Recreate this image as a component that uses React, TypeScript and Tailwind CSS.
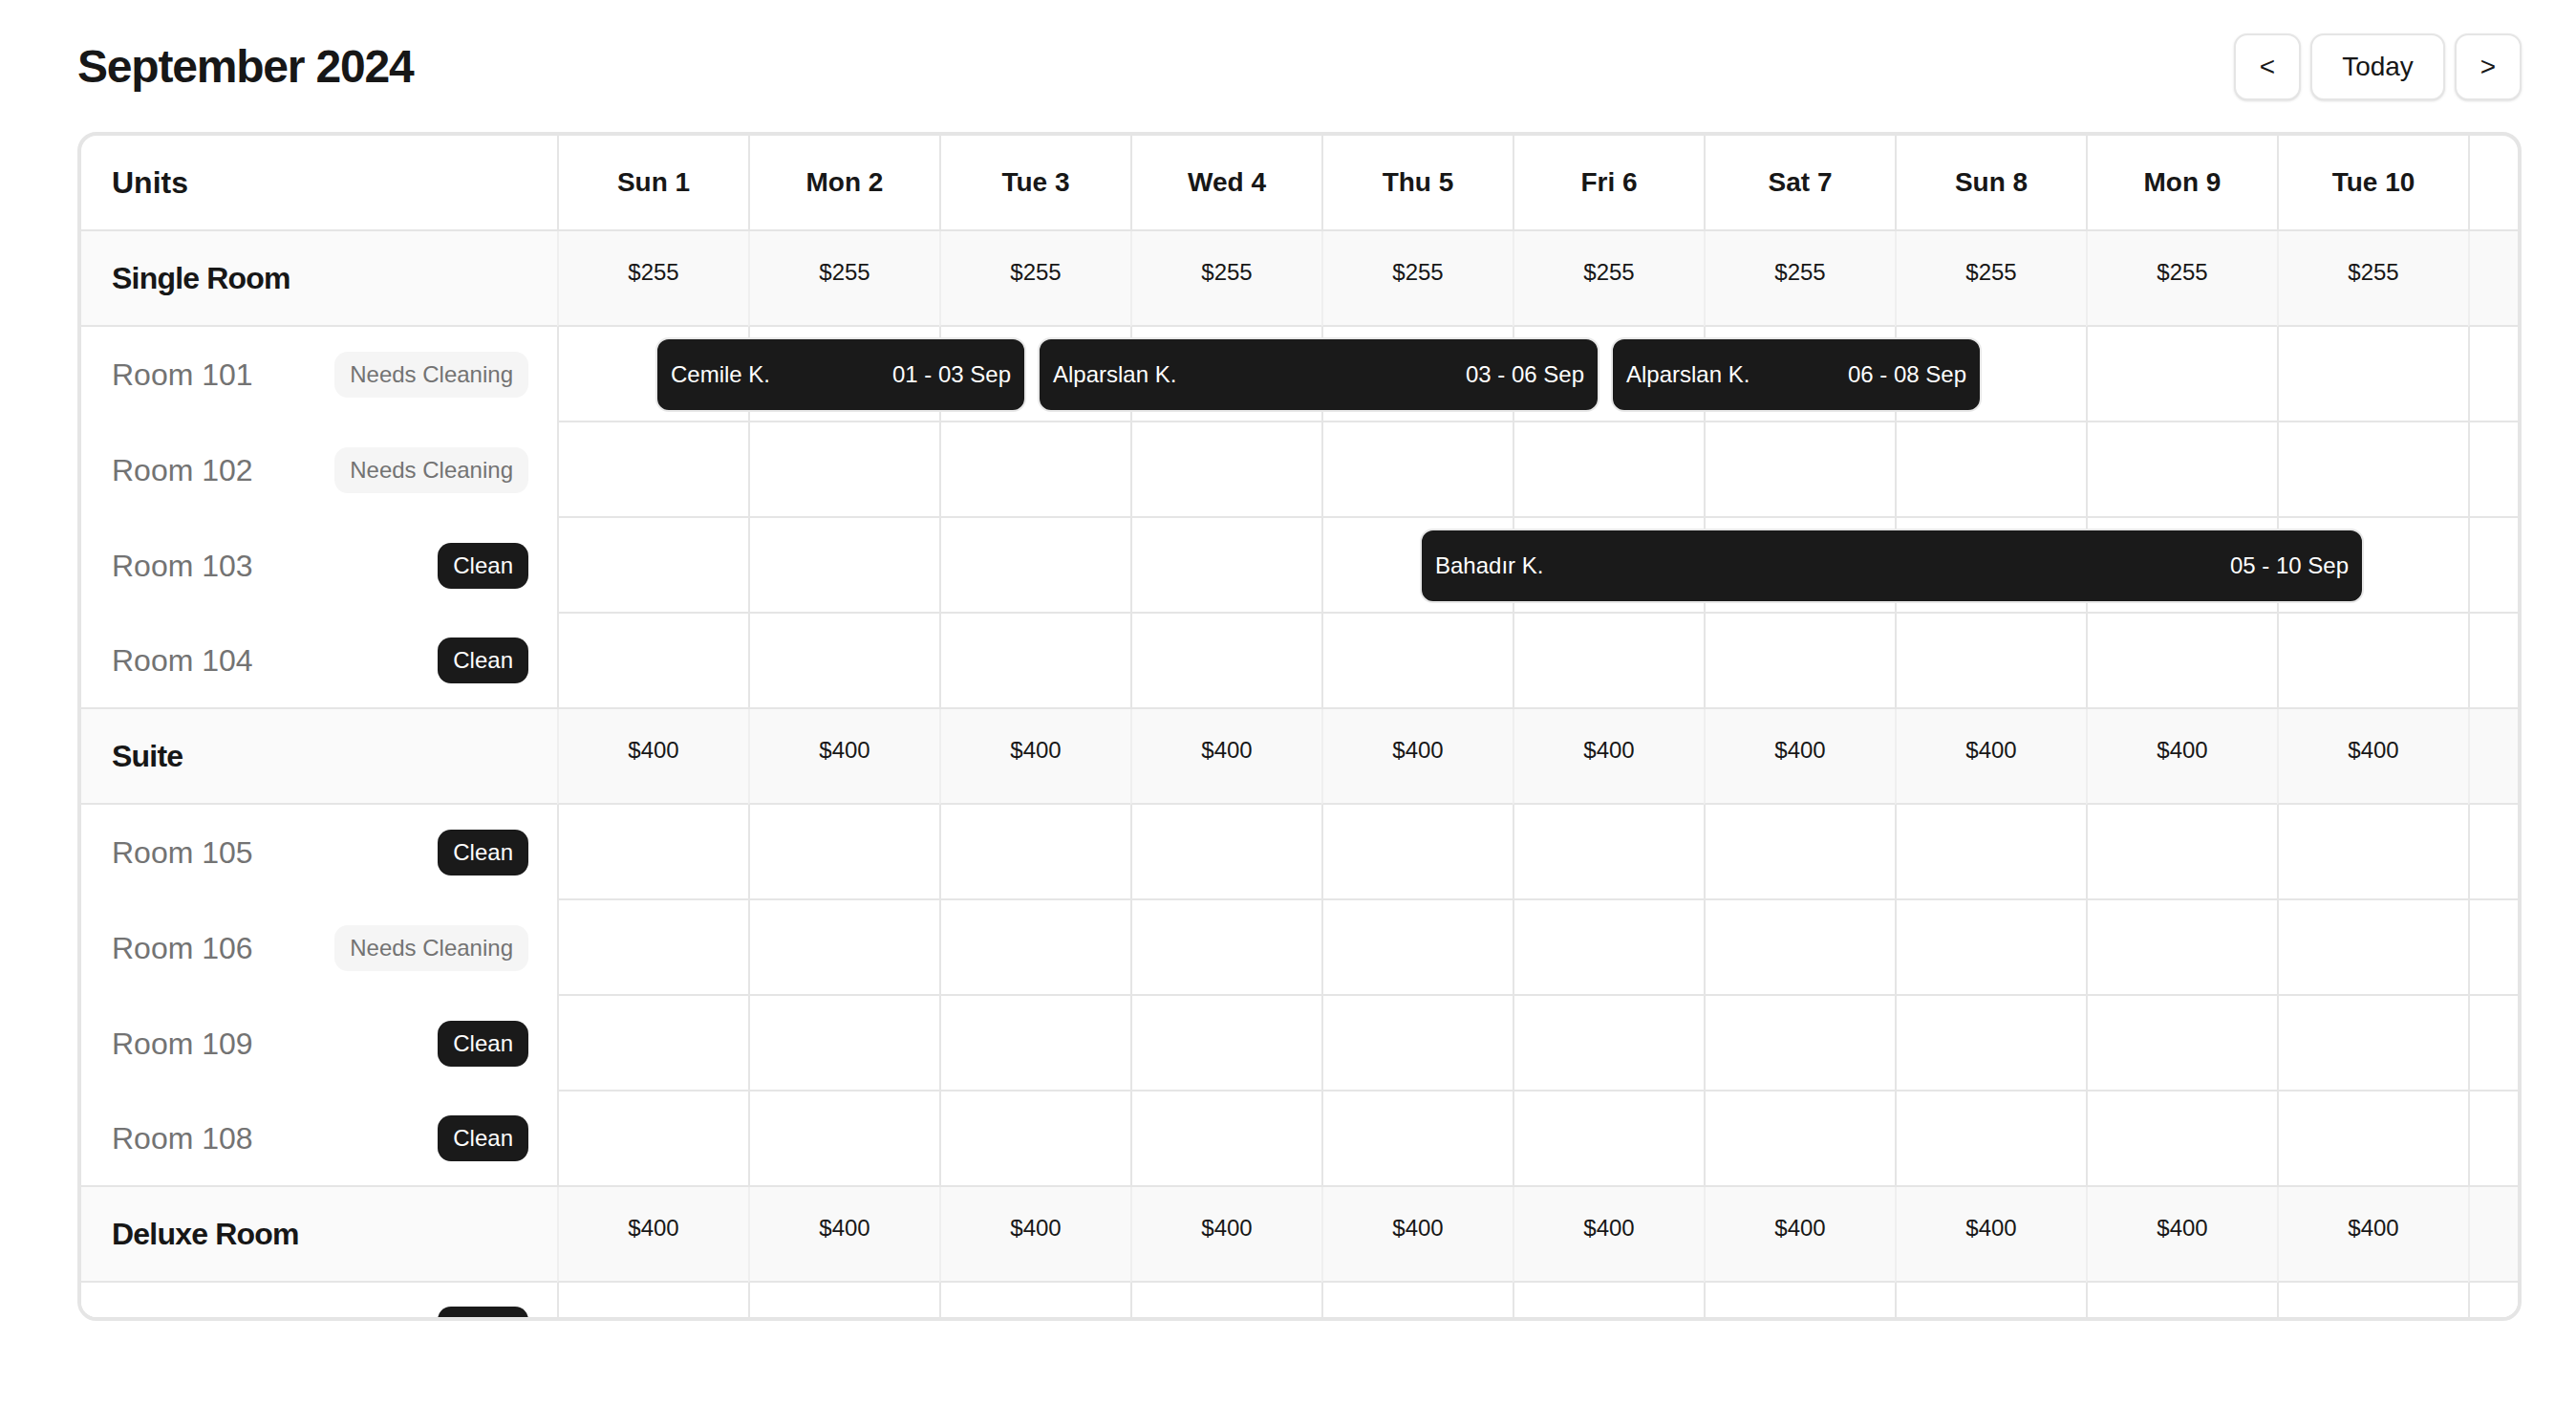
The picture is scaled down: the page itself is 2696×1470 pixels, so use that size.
import React from 'react';

type Status = 'clean' | 'dirty';

interface Booking {
    guest: string;
    start: number;
    end: number;
}

interface Room {
    name: string;
    status: Status;
    bookings?: Booking[];
}

interface Group {
    name: string;
    price: number;
    rooms: Room[];
}

const DAY_NAMES = ['Sun', 'Mon', 'Tue', 'Wed', 'Thu', 'Fri', 'Sat'];
// September 2024 starts on a Sunday; only the first days fit in the viewport
const days = Array.from({ length: 11 }, (_, i) => ({
    day: i + 1,
    label: `${DAY_NAMES[i % 7]} ${i + 1}`,
}));

const groups: Group[] = [
    {
        name: 'Single Room',
        price: 255,
        rooms: [
            {
                name: 'Room 101',
                status: 'dirty',
                bookings: [
                    { guest: 'Cemile K.', start: 1, end: 3 },
                    { guest: 'Alparslan K.', start: 3, end: 6 },
                    { guest: 'Alparslan K.', start: 6, end: 8 },
                ],
            },
            { name: 'Room 102', status: 'dirty' },
            { name: 'Room 103', status: 'clean', bookings: [{ guest: 'Bahadır K.', start: 5, end: 10 }] },
            { name: 'Room 104', status: 'clean' },
        ],
    },
    {
        name: 'Suite',
        price: 400,
        rooms: [
            { name: 'Room 105', status: 'clean' },
            { name: 'Room 106', status: 'dirty' },
            { name: 'Room 109', status: 'clean' },
            { name: 'Room 108', status: 'clean' },
        ],
    },
    {
        name: 'Deluxe Room',
        price: 400,
        rooms: [{ name: 'Room 110', status: 'clean' }],
    },
];

const UNIT_W = 498;
const DAY_W = 200;

const pad = (n: number) => String(n).padStart(2, '0');

const StatusBadge: React.FC<{ status: Status }> = ({ status }) =>
    status === 'clean' ? (
        <span className="rounded-[14px] bg-[#1a1a1a] px-[16px] py-[8px] text-[24px] leading-[32px] text-white">Clean</span>
    ) : (
        <span className="rounded-[14px] bg-[#f5f5f5] px-[16px] py-[8px] text-[24px] leading-[32px] text-[#737373]">
            Needs Cleaning
        </span>
    );

const BookingBar: React.FC<{ booking: Booking }> = ({ booking }) => {
    const left = UNIT_W + DAY_W / 2 + 3 + (booking.start - 1) * DAY_W;
    const width = (booking.end - booking.start) * DAY_W - 12;
    return (
        <div
            className="absolute top-[11px] flex h-[78px] items-center justify-between rounded-[14px] border-2 border-[#e8e8e8] bg-[#1a1a1a] px-[14px] text-[24px] text-white"
            style={{ left, width }}
        >
            <span>{booking.guest}</span>
            <span>
                {pad(booking.start)} - {pad(booking.end)} Sep
            </span>
        </div>
    );
};

const GroupRow: React.FC<{ group: Group }> = ({ group }) => (
    <div className="flex h-[100px]">
        <div
            className="flex shrink-0 items-center border-b-2 border-[#e5e5e5] bg-[#fafafa] pl-[32px] text-[32px] font-bold tracking-tight text-[#171717]"
            style={{ width: UNIT_W }}
        >
            {group.name}
        </div>
        {days.map((d) => (
            <div
                key={d.day}
                className="w-[200px] shrink-0 border-b-2 border-l-2 border-b-[#e5e5e5] border-l-[#efefef] bg-[#f9f9f9] pt-[27px] text-center text-[24px] leading-[32px] text-[#171717]"
            >
                ${group.price}
            </div>
        ))}
    </div>
);

const RoomRow: React.FC<{ room: Room; last: boolean }> = ({ room, last }) => (
    <div className="relative flex h-[100px]">
        <div
            className={`flex shrink-0 items-center justify-between bg-white pl-[32px] pr-[30px] ${
                last ? 'border-b-2 border-[#e5e5e5]' : ''
            }`}
            style={{ width: UNIT_W }}
        >
            <span className="text-[32px] text-[#737373]">{room.name}</span>
            <StatusBadge status={room.status} />
        </div>
        {days.map((d) => (
            <div key={d.day} className="w-[200px] shrink-0 border-b-2 border-l-2 border-[#e5e5e5] bg-white" />
        ))}
        {room.bookings?.map((b, i) => (
            <BookingBar key={i} booking={b} />
        ))}
    </div>
);

const NavButton: React.FC<{ children: React.ReactNode; wide?: boolean }> = ({ children, wide }) => (
    <button
        className={`flex h-[70px] items-center justify-center rounded-[14px] border-2 border-[#e5e5e5] bg-white text-[28px] text-[#171717] shadow-sm ${
            wide ? 'w-[141px]' : 'w-[70px]'
        }`}
    >
        {children}
    </button>
);

const App: React.FC = () => {
    return (
        <div className="min-h-screen bg-white pl-[81px] pr-[57px] pt-[35px] font-['Liberation_Sans',Arial,sans-serif] text-[#171717]">
            <div className="flex h-[70px] items-center justify-between">
                <h1 className="text-[48px] font-bold leading-none tracking-tight">September 2024</h1>
                <div className="flex gap-[10px]">
                    <NavButton>&lt;</NavButton>
                    <NavButton wide>Today</NavButton>
                    <NavButton>&gt;</NavButton>
                </div>
            </div>

            <div className="mt-[33px] h-[1244px] overflow-hidden rounded-[20px] border-4 border-[#e5e5e5]">
                <div className="w-max">
                    <div className="flex h-[100px] border-b-2 border-[#e5e5e5]">
                        <div className="flex shrink-0 items-center pl-[32px] text-[32px] font-bold" style={{ width: UNIT_W }}>
                            Units
                        </div>
                        {days.map((d) => (
                            <div
                                key={d.day}
                                className="flex w-[200px] shrink-0 items-center justify-center border-l-2 border-[#e5e5e5] text-[28px] font-bold"
                            >
                                {d.label}
                            </div>
                        ))}
                    </div>

                    {groups.map((g) => (
                        <React.Fragment key={g.name}>
                            <GroupRow group={g} />
                            {g.rooms.map((r, i) => (
                                <RoomRow key={r.name} room={r} last={i === g.rooms.length - 1} />
                            ))}
                        </React.Fragment>
                    ))}
                </div>
            </div>
        </div>
    );
};

export default App;
